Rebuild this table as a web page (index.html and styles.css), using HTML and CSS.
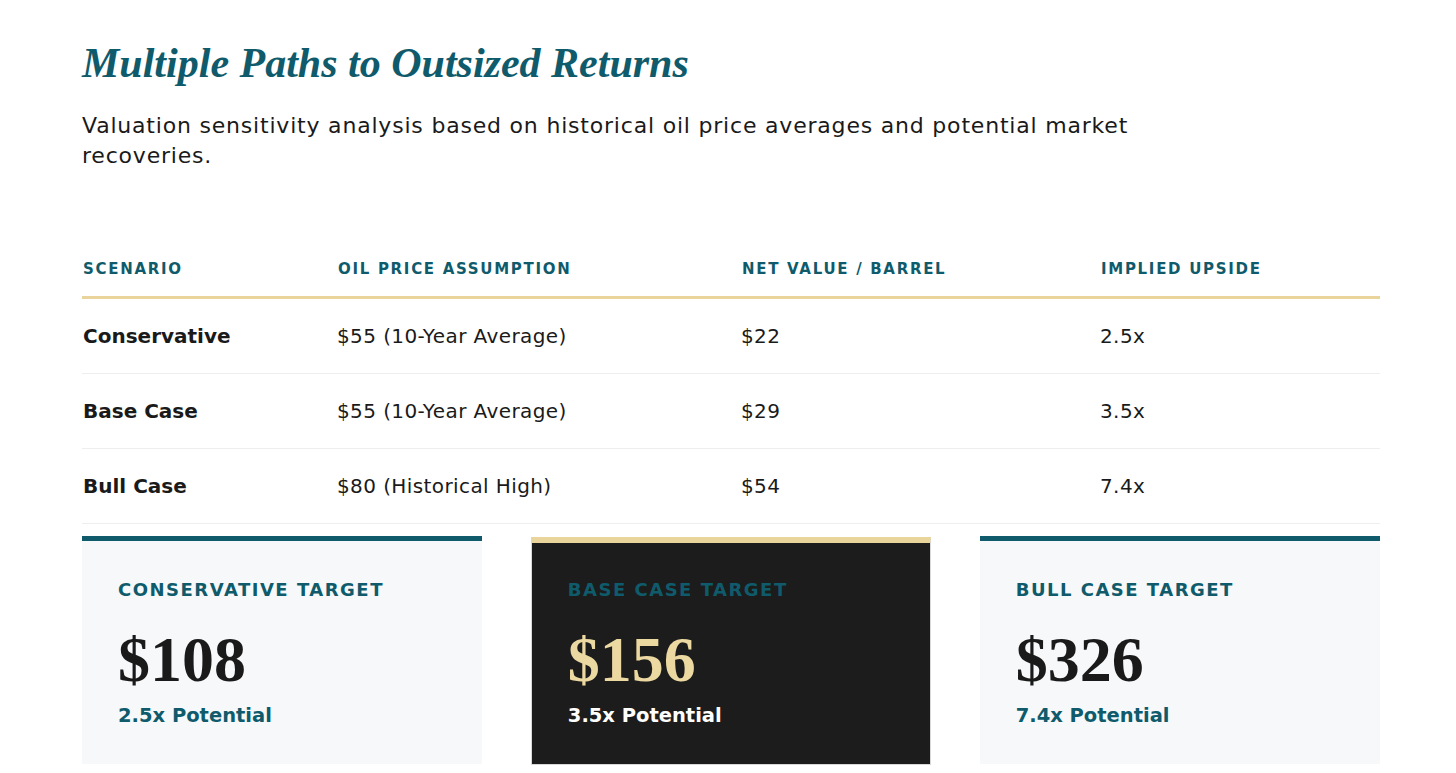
FILE: index.html
```html
<!DOCTYPE html>
<html lang="en">
<head>
<meta charset="utf-8">
<title>Multiple Paths to Outsized Returns</title>
<link rel="stylesheet" href="styles.css">
</head>
<body>
<main class="page">
  <h1 class="title">Multiple Paths to Outsized Returns</h1>
  <p class="lead">Valuation sensitivity analysis based on historical oil price averages and potential market recoveries.</p>

  <div class="table">
    <div class="row head">
      <div class="cell">Scenario</div>
      <div class="cell">Oil Price Assumption</div>
      <div class="cell">Net Value / Barrel</div>
      <div class="cell">Implied Upside</div>
    </div>
    <div class="row">
      <div class="cell name">Conservative</div>
      <div class="cell">$55 (10-Year Average)</div>
      <div class="cell">$22</div>
      <div class="cell">2.5x</div>
    </div>
    <div class="row">
      <div class="cell name">Base Case</div>
      <div class="cell">$55 (10-Year Average)</div>
      <div class="cell">$29</div>
      <div class="cell">3.5x</div>
    </div>
    <div class="row">
      <div class="cell name">Bull Case</div>
      <div class="cell">$80 (Historical High)</div>
      <div class="cell">$54</div>
      <div class="cell">7.4x</div>
    </div>
  </div>

  <div class="cards">
    <section class="card">
      <div class="card-label">Conservative Target</div>
      <div class="card-value">$108</div>
      <div class="card-sub">2.5x Potential</div>
    </section>
    <section class="card card-dark">
      <div class="card-label">Base Case Target</div>
      <div class="card-value">$156</div>
      <div class="card-sub">3.5x Potential</div>
    </section>
    <section class="card">
      <div class="card-label">Bull Case Target</div>
      <div class="card-value">$326</div>
      <div class="card-sub">7.4x Potential</div>
    </section>
  </div>
</main>
</body>
</html>
```

FILE: styles.css
```css
* { box-sizing: border-box; }
html, body { margin: 0; padding: 0; background: #ffffff; }
body {
  font-family: "DejaVu Sans", "Noto Sans", sans-serif;
  color: #1a1a1a;
  overflow: hidden;
}
.page {
  width: 1298px;
  margin-left: 82px;
  padding-top: 33px;
}
.title {
  margin: 0;
  font-family: "Liberation Serif", "DejaVu Serif", serif;
  font-style: italic;
  font-weight: 700;
  font-size: 42px;
  line-height: 60px;
  color: #0f5b6b;
}
.lead {
  margin: 18px 0 0;
  max-width: 1070px;
  font-size: 22px;
  letter-spacing: 0.8px;
  line-height: 30px;
  color: #1a1a1a;
}
.table {
  margin-top: 88px;
}
.row {
  display: grid;
  grid-template-columns: 255px 404px 359px 1fr;
  height: 75px;
  align-items: center;
  border-bottom: 1px solid #eeeeee;
}
.row.head {
  height: 40px;
  align-items: start;
  padding-top: 0;
  border-bottom: 3px solid #e9d49c;
}
.row.head .cell {
  font-size: 15px;
  font-weight: 700;
  letter-spacing: 1.7px;
  text-transform: uppercase;
  color: #0f5b6b;
  line-height: 20px;
  padding-left: 1px;
}
.cell {
  font-size: 20px;
  letter-spacing: 0.4px;
  line-height: 24px;
  color: #1a1a1a;
}
.cell.name {
  font-weight: 700;
  letter-spacing: 0;
  padding-left: 1px;
}
.cards {
  display: grid;
  grid-template-columns: repeat(3, 1fr);
  gap: 48.5px;
  margin-top: 12px;
}
.card {
  background: #f6f8fa;
  border-top: 5px solid #0f5b6b;
  height: 228px;
  padding: 37px 36px 0;
}
.card-dark {
  background: #1c1c1c;
  border: 1px solid #d8d8d8;
  border-top: 6px solid #e9d49c;
  margin-top: 1px;
  padding-top: 35px;
}
.card-label {
  font-size: 18px;
  font-weight: 700;
  letter-spacing: 1.5px;
  text-transform: uppercase;
  color: #0f5b6b;
  line-height: 24px;
}
.card-value {
  margin-top: 24px;
  font-family: "Liberation Serif", "DejaVu Serif", serif;
  font-weight: 700;
  font-size: 64px;
  line-height: 68px;
  color: #1a1a1a;
}
.card-dark .card-value { color: #ecd9a1; }
.card-sub {
  margin-top: 9px;
  font-size: 19.5px;
  font-weight: 700;
  line-height: 26px;
  color: #0f5b6b;
}
.card-dark .card-sub { color: #ffffff; }
```
